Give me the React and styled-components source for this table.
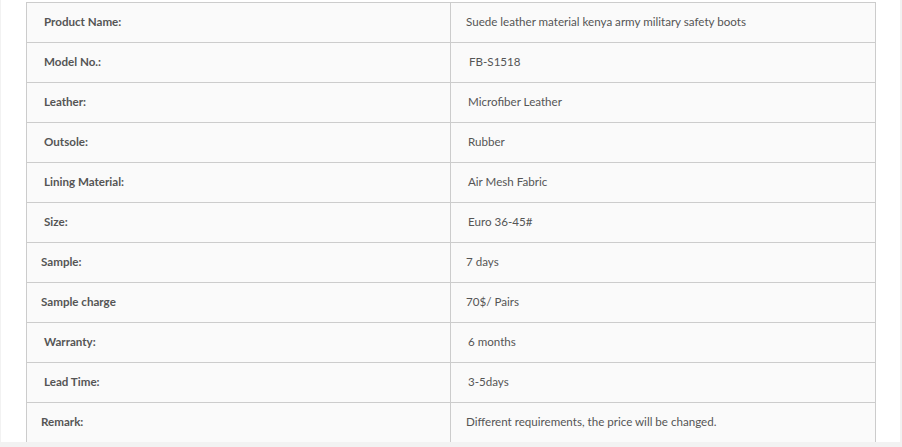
import React from "react";
import styled, { createGlobalStyle } from "styled-components";

const GlobalStyle = createGlobalStyle`
  html, body {
    margin: 0;
    padding: 0;
    background: #f2f2f2;
  }
`;

const Panel = styled.div`
  width: 899px;
  height: 442px;
  margin-left: 1px;
  background: #ffffff;
  padding: 2px 0 0 25px;
  box-sizing: border-box;
`;

const Table = styled.table`
  width: 850px;
  border-collapse: collapse;
  table-layout: fixed;
  font-family: "Lato", "Open Sans", sans-serif;
  font-size: 11.6px;
  color: #555555;
`;

const Cell = styled.td`
  height: 37px;
  padding: 0 0 2px ${(p) => p.$indent}px;
  border: 1px solid #cccccc;
  background: #fafafa;
  font-weight: ${(p) => (p.$label ? 700 : 400)};
  vertical-align: middle;
  white-space: nowrap;
`;

const rows = [
  ["Product Name:", "Suede leather material kenya army military safety boots", 17, 15],
  ["Model No.:", "FB-S1518", 17, 18],
  ["Leather:", "Microfiber Leather", 17, 17],
  ["Outsole:", "Rubber", 17, 17],
  ["Lining Material:", "Air Mesh Fabric", 17, 17],
  ["Size:", "Euro 36-45#", 17, 17],
  ["Sample:", "7 days", 14, 15],
  ["Sample charge", "70$/ Pairs", 14, 15],
  ["Warranty:", "6 months", 17, 17],
  ["Lead Time:", "3-5days", 17, 17],
  ["Remark:", "Different requirements, the price will be changed.", 14, 15],
];

export default function App() {
  return (
    <>
      <GlobalStyle />
      <Panel>
        <Table>
          <colgroup>
            <col style={{ width: 424 }} />
            <col />
          </colgroup>
          <tbody>
            {rows.map(([label, value, li, vi]) => (
              <tr key={label}>
                <Cell $label $indent={li}>{label}</Cell>
                <Cell $indent={vi}>{value}</Cell>
              </tr>
            ))}
          </tbody>
        </Table>
      </Panel>
    </>
  );
}
